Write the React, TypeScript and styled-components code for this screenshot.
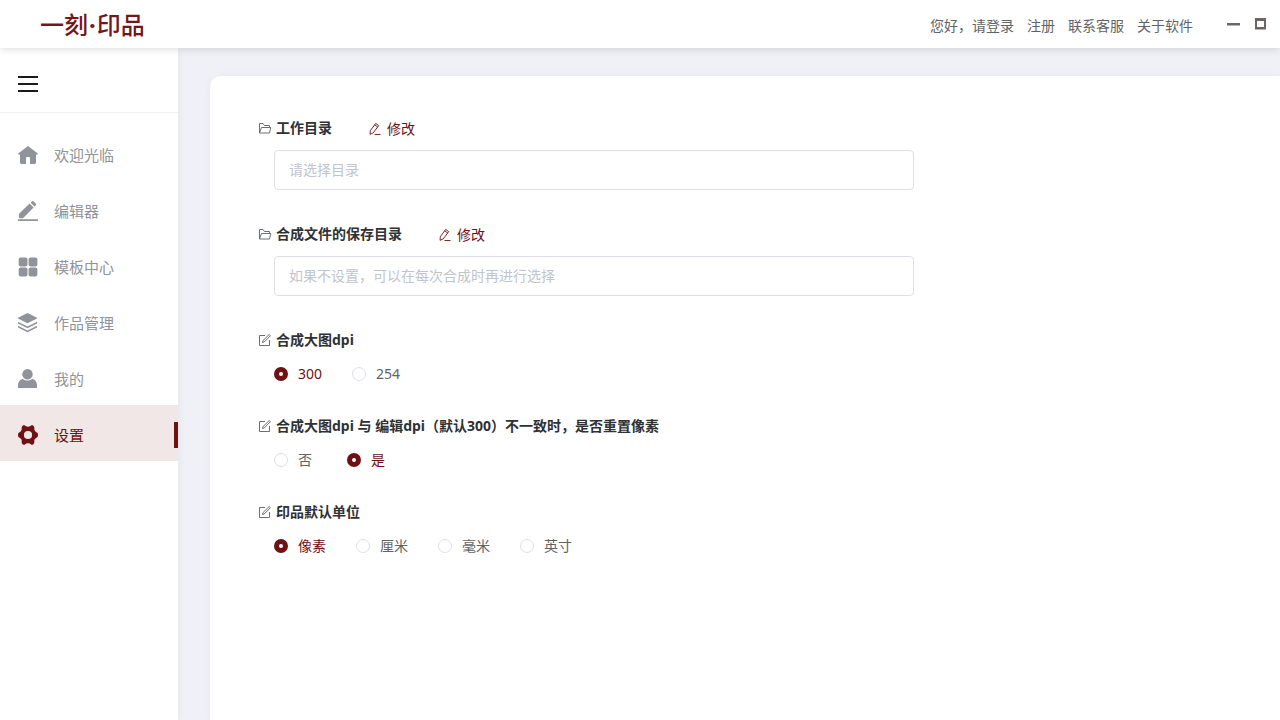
import React, { useState } from "react";
import styled, { createGlobalStyle } from "styled-components";

const wine = "#6f1013";

const GlobalStyle = createGlobalStyle`
  * { box-sizing: border-box; }
  body {
    margin: 0;
    background: #eff1f6;
    color: #606266;
    font: 14px/20px "Noto Sans", "Noto Sans CJK SC", sans-serif;
    overflow: hidden;
  }
  button, input { font: inherit; color: inherit; }
`;

const Page = styled.div`
  display: flex;
  flex-direction: column;
  min-height: 100vh;
`;

const TopBar = styled.header`
  display: flex;
  align-items: center;
  justify-content: space-between;
  height: 48px;
  padding: 0 11px 0 40px;
  background: #fff;
  box-shadow: 0 1px 8px rgba(0, 0, 0, 0.14);
  z-index: 2;
`;

const Logo = styled.h1`
  margin: 0;
  color: #74171c;
  font: 500 24px/48px "Noto Sans CJK SC", sans-serif;
`;

const LogoDot = styled.span`
  padding: 0 1px;
  font-family: "Noto Sans", sans-serif;
  font-weight: 700;
`;

const TopLinks = styled.nav`
  display: flex;
  align-items: center;
  gap: 13px;
  padding-top: 4px;
`;

const TopLink = styled.a`
  color: #606266;
  text-decoration: none;
`;

const TopRight = styled.div`
  display: flex;
  align-items: center;
  gap: 32px;
`;

const WindowButtons = styled.div`
  display: flex;
  gap: 12px;
`;

const IconButton = styled.button`
  display: flex;
  padding: 0;
  border: 0;
  background: none;
  cursor: pointer;
`;

const Body = styled.div`
  display: flex;
  flex: 1;
`;

const Sidebar = styled.aside`
  flex: none;
  width: 178px;
  background: #fff;
  box-shadow: 0 0 8px rgba(0, 0, 0, 0.06);
  z-index: 1;
`;

const SidebarHead = styled.div`
  display: flex;
  align-items: center;
  height: 65px;
  padding: 8px 18px 0;
  border-bottom: 1px solid #f0f1f6;
`;

const Menu = styled.nav`
  display: flex;
  flex-direction: column;
  padding-top: 12px;
`;

const MenuItem = styled.a<{ $active: boolean }>`
  display: flex;
  align-items: center;
  gap: 16px;
  height: 56px;
  padding: 4px 0 0 18px;
  font-size: 15px;
  text-decoration: none;
  color: ${(p) => (p.$active ? wine : "#909399")};
  background: ${(p) => (p.$active ? "#f1e7e7" : "transparent")};
  &::after {
    content: "";
    width: 4px;
    height: 26px;
    margin-left: auto;
    background: ${(p) => (p.$active ? wine : "transparent")};
  }
`;

const Main = styled.main`
  display: flex;
  flex: 1;
  min-width: 0;
  padding: 28px 0 0 32px;
`;

const Card = styled.form`
  flex: 1;
  padding: 42px 48px;
  background: #fff;
  border-radius: 10px 0 0 0;
  box-shadow: 0 0 8px rgba(0, 0, 0, 0.04);
`;

const Section = styled.section<{ $gap: number }>`
  display: flex;
  flex-direction: column;
  gap: 12px;
  margin-bottom: ${(p) => p.$gap}px;
`;

const TitleRow = styled.div`
  display: flex;
  align-items: center;
  gap: 36px;
  height: 20px;
`;

const Title = styled.label`
  display: flex;
  align-items: center;
  gap: 4px;
  font-weight: 700;
  color: #303133;
`;

const EditButton = styled(IconButton)`
  align-items: center;
  gap: 5px;
  padding-top: 2px;
  color: ${wine};
`;

const PathInput = styled.input`
  width: 640px;
  max-width: 100%;
  height: 40px;
  margin-left: 16px;
  padding: 0 14px 2px;
  border: 1px solid #dcdfe6;
  border-radius: 4px;
  background: #fff;
  outline: none;
  &::placeholder { color: #c0c4cc; }
`;

const Options = styled.div<{ $gap: number }>`
  display: flex;
  gap: ${(p) => p.$gap}px;
  height: 24px;
  margin-left: 16px;
`;

const Option = styled.label<{ $checked: boolean }>`
  display: flex;
  align-items: center;
  gap: 10px;
  color: ${(p) => (p.$checked ? wine : "#606266")};
  cursor: pointer;
`;

const Radio = styled.input`
  appearance: none;
  width: 14px;
  height: 14px;
  margin: 0;
  border: 1px solid #dcdfe6;
  border-radius: 50%;
  background: #fff;
  &:checked { border: 5px solid ${wine}; }
`;

const HomeIcon = () => (
  <svg width="20" height="20" viewBox="0 0 20 20" fill="currentColor">
    <path d="M10 1 .2 8.600c-.4.4-.2 1 .3 1H2v7.900c0 .9.6 1.500 1.500 1.500H8v-6.200c0-.5.3-.8.8-.8h2.400c.5 0 .8.3.8.8V19h4.500c.9 0 1.500-.6 1.500-1.500V9.600h1.500c.5 0 .7-.6.3-1Z" />
  </svg>
);
const PenIcon = () => (
  <svg width="20" height="20" viewBox="0 0 20 20" fill="currentColor">
    <path d="M0 18.200h20V20H0zM1 12.800 11.600 2.600l4 4L5 17.200H1.900a.9.9 0 0 1-.9-.9ZM12.600 1.700 14 .3a1 1 0 0 1 1.400 0l2.500 2.500a1 1 0 0 1 0 1.400L16.500 5.600Z" />
  </svg>
);
const GridIcon = () => (
  <svg width="20" height="20" viewBox="0 0 20 20" fill="currentColor">
    <rect x=".7" y=".6" width="8.800" height="8.800" rx="2" />
    <rect x="10.600" y=".6" width="8.800" height="8.800" rx="2" />
    <rect x=".7" y="10.600" width="8.800" height="8.800" rx="2" />
    <rect x="10.600" y="10.600" width="8.800" height="8.800" rx="2" />
  </svg>
);
const LayersIcon = () => (
  <svg width="20" height="20" viewBox="0 0 20 20" fill="currentColor">
    <path d="M9.500 0 19 4.700v.8l-9.500 4.700L0 5.500v-.8ZM0 8.700l9.500 4.700L19 8.700v1.700l-9.500 4.800L0 10.400ZM0 12.800l9.500 4.700 9.500-4.700v1.700L9.500 19.300 0 14.500Z" />
  </svg>
);
const UserIcon = () => (
  <svg width="20" height="20" viewBox="0 0 20 20" fill="currentColor">
    <circle cx="9.500" cy="5.200" r="5.200" />
    <path d="M0 19v-2.500C0 12.600 2.500 10 5 10c2.800 2 6.200 2 9 0 2.500 0 5 2.600 5 6.500V19Z" />
  </svg>
);
const GearIcon = () => (
  <svg width="20" height="20" viewBox="0 0 20 20" fill="currentColor" fillRule="evenodd">
    <path d="M4 1.600C4.600.4 6 0 7 .5c.8.5 1.200 1.200 3 1.200s2.200-.7 3-1.200c1-.5 2.400-.1 3 1.100.5.900.3 1.700.3 2.500 0 1.200.5 2.100 1.500 2.700.8.5 2.200.9 2.200 3.200s-1.400 2.700-2.200 3.200c-1 .6-1.500 1.500-1.500 2.700 0 .8.2 1.600-.3 2.500-.6 1.200-2 1.600-3 1.100-.8-.5-1.200-1.200-3-1.200s-2.200.7-3 1.200c-1 .5-2.400.1-3-1.100-.5-.9-.3-1.700-.3-2.500 0-1.200-.5-2.100-1.500-2.700C1.400 12.700 0 12.300 0 10s1.400-2.700 2.200-3.200c1-.6 1.500-1.500 1.500-2.700 0-.8-.2-1.600.3-2.500ZM10 5.900a4.100 4.100 0 1 0 0 8.200 4.100 4.100 0 0 0 0-8.200Z" />
  </svg>
);
const MenuIcon = () => (
  <svg width="20" height="16" viewBox="0 0 20 16" stroke="#1a1a1a" strokeWidth="2">
    <path d="M0 1h20M0 8h20M0 15h20" />
  </svg>
);
const FolderIcon = () => (
  <svg width="14" height="14" viewBox="0 0 14 14" fill="none" stroke="#6c6e72">
    <path d="M1.500 12V2.500H5L6.500 4.500h5V6M1.500 12 3.500 6.500h9.300L11.500 12Z" />
  </svg>
);
const NoteIcon = () => (
  <svg width="14" height="14" viewBox="0 0 14 14" fill="none" stroke="#6c6e72">
    <path d="M7 2.500H1.500v10h10V7M4.500 9.500l.4-1.800 6.300-6.200 1.200 1.200L6.200 9Z" />
  </svg>
);
const EditIcon = () => (
  <svg width="14" height="14" viewBox="0 0 14 14" fill="none" stroke="currentColor" strokeWidth=".9">
    <path d="M2.300 8.700 7.700 1.400l3 2.200-5.500 7.300-3.100 1.400ZM6.700 2.800l3 2.200M6.500 12.500h6" />
  </svg>
);

const menu = [
  { name: "欢迎光临", Icon: HomeIcon },
  { name: "编辑器", Icon: PenIcon },
  { name: "模板中心", Icon: GridIcon },
  { name: "作品管理", Icon: LayersIcon },
  { name: "我的", Icon: UserIcon },
  { name: "设置", Icon: GearIcon },
];

function PathField({ id, title, hint }: { id: string; title: string; hint: string }) {
  return (
    <Section $gap={34}>
      <TitleRow>
        <Title htmlFor={id}><FolderIcon />{title}</Title>
        <EditButton type="button"><EditIcon />修改</EditButton>
      </TitleRow>
      <PathInput id={id} placeholder={hint} />
    </Section>
  );
}

type RadioFieldProps = {
  name: string;
  title: string;
  options: string[];
  initial: string;
  gap?: number;
};

function RadioField({ name, title, options, initial, gap = 30 }: RadioFieldProps) {
  const [value, setValue] = useState(initial);
  return (
    <Section $gap={30} role="radiogroup" aria-labelledby={name}>
      <TitleRow>
        <Title as="div" id={name}><NoteIcon />{title}</Title>
      </TitleRow>
      <Options $gap={gap}>
        {options.map((o) => (
          <Option key={o} $checked={o === value}>
            <Radio type="radio" name={name} checked={o === value} onChange={() => setValue(o)} />
            {o}
          </Option>
        ))}
      </Options>
    </Section>
  );
}

export default function App() {
  const [active, setActive] = useState("设置");
  return (
    <Page>
      <GlobalStyle />
      <TopBar>
        <Logo>一刻<LogoDot>·</LogoDot>印品</Logo>
        <TopRight>
          <TopLinks>
            <TopLink href="#login">您好，请登录</TopLink>
            <TopLink href="#register">注册</TopLink>
            <TopLink href="#service">联系客服</TopLink>
            <TopLink href="#about">关于软件</TopLink>
          </TopLinks>
          <WindowButtons>
            <IconButton type="button" aria-label="最小化">
              <svg width="16" height="16" viewBox="0 0 16 16"><path d="M2 7h13v2.500H2z" fill="#6b6664" /></svg>
            </IconButton>
            <IconButton type="button" aria-label="最大化">
              <svg width="16" height="16" viewBox="0 0 16 16"><path d="M2 2h11v11.500H2zM4 5v6h7V5z" fill="#6b6664" fillRule="evenodd" /></svg>
            </IconButton>
          </WindowButtons>
        </TopRight>
      </TopBar>
      <Body>
        <Sidebar>
          <SidebarHead>
            <IconButton type="button" aria-label="菜单"><MenuIcon /></IconButton>
          </SidebarHead>
          <Menu>
            {menu.map(({ name, Icon }) => (
              <MenuItem key={name} href="#" $active={name === active} onClick={() => setActive(name)}>
                <Icon />{name}
              </MenuItem>
            ))}
          </Menu>
        </Sidebar>
        <Main>
          <Card>
            <PathField id="work-dir" title="工作目录" hint="请选择目录" />
            <PathField id="save-dir" title="合成文件的保存目录" hint="如果不设置，可以在每次合成时再进行选择" />
            <RadioField name="dpi" title="合成大图dpi" options={["300", "254"]} initial="300" />
            <RadioField name="reset" title="合成大图dpi 与 编辑dpi（默认300）不一致时，是否重置像素" options={["否", "是"]} initial="是" gap={35} />
            <RadioField name="unit" title="印品默认单位" options={["像素", "厘米", "毫米", "英寸"]} initial="像素" />
          </Card>
        </Main>
      </Body>
    </Page>
  );
}
